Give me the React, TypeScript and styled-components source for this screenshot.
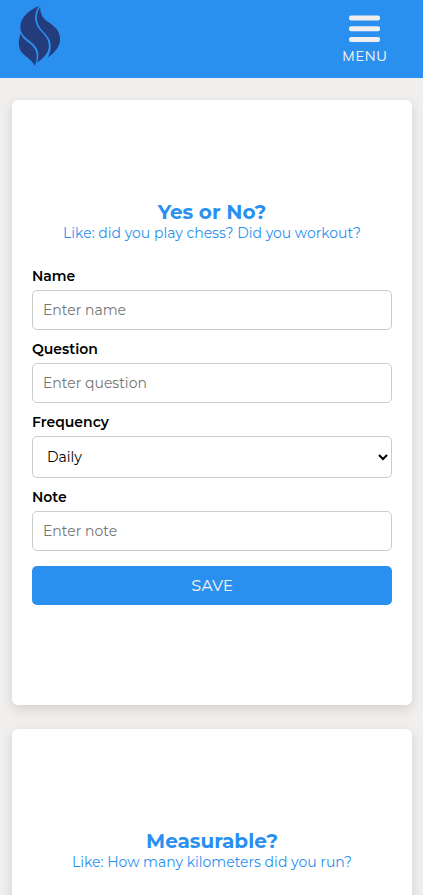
import React from "react";
import styled, { createGlobalStyle } from "styled-components";

const GlobalStyle = createGlobalStyle`
  *, *::before, *::after { box-sizing: border-box; }
  html, body { margin: 0; padding: 0; }
  body {
    background: #f0efed;
    font-family: Montserrat, Inter, sans-serif;
  }
`;

const Page = styled.div`
  display: flex;
  flex-direction: column;
  height: 100vh;
  overflow: hidden;
`;

const Header = styled.header`
  display: flex;
  flex: none;
  justify-content: space-between;
  height: 78px;
  padding: 6px 36px 0 18px;
  background: #2a90f0;
`;

const Logo = styled.svg`
  display: block;
  width: 43px;
  height: 61px;
`;

const MenuButton = styled.button`
  display: flex;
  flex-direction: column;
  align-items: center;
  width: 45px;
  height: 62px;
  padding: 9px 0 0;
  border: 0;
  background: none;
  color: #f0efed;
`;

const MenuIcon = styled.svg`
  display: block;
  width: 31px;
  height: 27px;
`;

const MenuLabel = styled.span`
  margin: 4px -1px 0 0;
  font: 400 14.4px/20px Mulish, Nunito, "Open Sans", sans-serif;
  letter-spacing: 0.8px;
`;

const Main = styled.main`
  display: flex;
  flex: 1;
  flex-direction: column;
  gap: 24px;
  min-height: 0;
  overflow: hidden;
  padding: 22px 11px 0 12px;
`;

const Card = styled.section`
  display: flex;
  flex-direction: column;
  flex: none;
  height: 605px;
  padding: 100px 20px 0;
  border-radius: 6px;
  background: #fff;
  box-shadow: 0 4px 12px rgba(0, 0, 0, 0.13);
`;

const Title = styled.h2`
  margin: 0;
  color: #2a90f0;
  font-size: 20px;
  line-height: 24px;
  font-weight: 700;
  text-align: center;
`;

const Subtitle = styled.p`
  margin: 0 0 25px;
  color: #2a90f0;
  font-size: 14px;
  line-height: 18px;
  font-weight: 400;
  text-align: center;
  white-space: nowrap;
`;

const Form = styled.form`
  display: flex;
  flex-direction: column;
`;

const Field = styled.div`
  display: flex;
  flex-direction: column;
  margin-bottom: 10px;
`;

const Label = styled.label`
  height: 23px;
  color: #000;
  font-size: 14px;
  line-height: 18px;
  font-weight: 600;
`;

const Input = styled.input`
  height: 40px;
  padding: 0 10px;
  border: 1px solid #ccc;
  border-radius: 5px;
  background: #fff;
  font-family: inherit;
  font-size: 14px;
  &::placeholder { color: #757575; opacity: 1; }
`;

const Select = styled.select`
  height: 42px;
  padding: 0 0 0 10px;
  border: 1px solid #ccc;
  border-radius: 5px;
  background: #fff;
  color: #000;
  font-family: inherit;
  font-size: 14px;
`;

const SaveButton = styled.button`
  height: 39px;
  margin-top: 5px;
  padding: 0;
  border: 0;
  border-radius: 5px;
  background: #2a90f0;
  color: #f0efed;
  font: 400 16px/39px Mulish, Nunito, "Open Sans", sans-serif;
`;

function FlameLogo() {
  return (
    <Logo viewBox="18 6 43 61" fill="#243c7c" aria-label="Flame logo">
      <path d="M39 6C28 10.500 20.500 18 20.300 27C20.300 37 30.500 40 35.500 46.500C39 51 39 57 37 62.800C42 59 48.800 54 48.800 46C48.800 37.500 43 34 39 29C34 22.500 33.800 13 39 6Z" />
      <path d="M40.200 7.200C35.800 13 35.800 21 40 27.500C44 33.500 50.800 37 50.800 46C50.800 50 49.700 54 47.700 57.500C54 53 60 47.500 60 39.500C60 30 54.500 26.500 47.500 21.500C42.500 18 40.300 13.500 40.200 7.200Z" />
      <path d="M20.600 33.500C17.800 41.500 18 48.500 23 53.800C27.500 58.200 32.300 60.500 34.800 66C37 60 38 53.500 34 48C29.800 41.500 22.800 40.500 20.600 33.500Z" />
    </Logo>
  );
}

type FieldSpec = { name: string; hint?: string };

const habitFields: FieldSpec[] = [
  { name: "Name", hint: "Enter name" },
  { name: "Question", hint: "Enter question" },
  { name: "Frequency" },
  { name: "Note", hint: "Enter note" },
];

function HabitForm() {
  return (
    <Form>
      {habitFields.map((f) => (
        <Field key={f.name}>
          <Label>{f.name}</Label>
          {f.hint ? (
            <Input placeholder={f.hint} />
          ) : (
            <Select defaultValue="Daily">
              <option>Daily</option>
              <option>Weekly</option>
              <option>Monthly</option>
            </Select>
          )}
        </Field>
      ))}
      <SaveButton type="button">SAVE</SaveButton>
    </Form>
  );
}

type CardProps = { title: string; subtitle: string; children?: React.ReactNode };

function HabitCard({ title, subtitle, children }: CardProps) {
  return (
    <Card>
      <Title>{title}</Title>
      <Subtitle>{subtitle}</Subtitle>
      {children}
    </Card>
  );
}

export default function App() {
  return (
    <Page>
      <GlobalStyle />
      <Header>
        <FlameLogo />
        <MenuButton type="button">
          <MenuIcon viewBox="0 0 31 27" fill="#f0efed">
            <rect width="31" height="5" y="0.500" rx="2" />
            <rect width="31" height="5" y="11.200" rx="2" />
            <rect width="31" height="5" y="22" rx="2" />
          </MenuIcon>
          <MenuLabel>MENU</MenuLabel>
        </MenuButton>
      </Header>
      <Main>
        <HabitCard title="Yes or No?" subtitle="Like: did you play chess? Did you workout?">
          <HabitForm />
        </HabitCard>
        <HabitCard title="Measurable?" subtitle="Like: How many kilometers did you run?" />
      </Main>
    </Page>
  );
}
